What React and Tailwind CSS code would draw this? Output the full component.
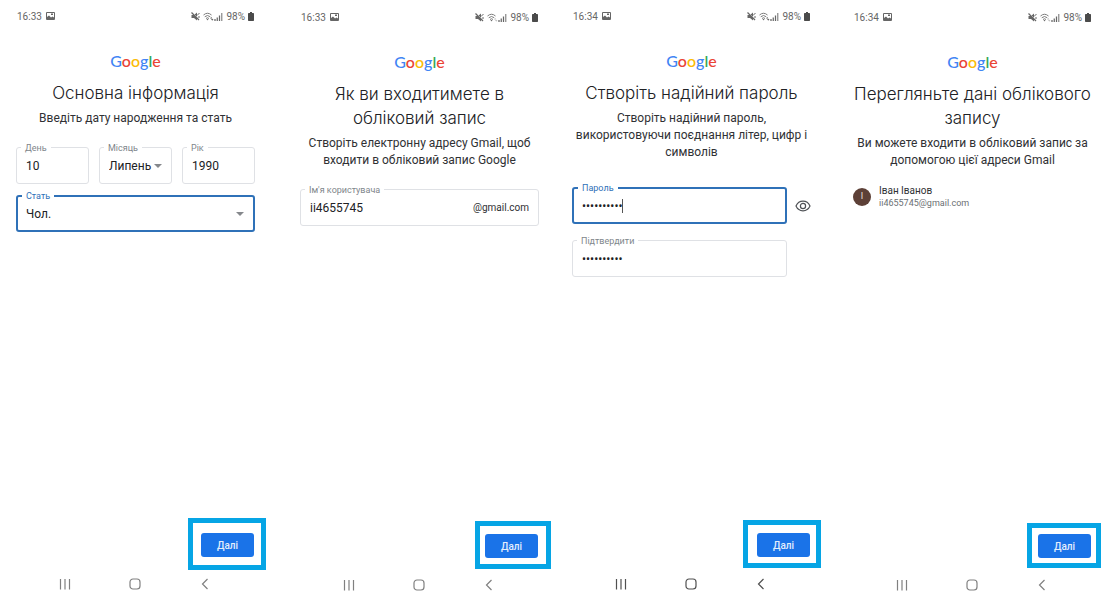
import { useId } from "react";

function PhotoIcon() {
  return (
    <svg viewBox="0 0 18 16" className="h-2 w-[9px]" aria-hidden="true">
      <path
        fillRule="evenodd"
        fill="currentColor"
        d="M2 0h14a2 2 0 0 1 2 2v12a2 2 0 0 1-2 2H2a2 2 0 0 1-2-2V2a2 2 0 0 1 2-2zm0 2v8l4-3 4 4 3-2 3 2V2zm8 1h4v3h-4z"
      />
    </svg>
  );
}

function MuteIcon() {
  return (
    <svg viewBox="0 0 18 18" className="h-[9px] w-[9px]" aria-hidden="true">
      <path fill="currentColor" d="M1 6h5l6-5v16l-6-5H1z" />
      <path d="M3 1l14 14" stroke="#fff" strokeWidth="1.5" />
      <path d="M1 1l15 15" stroke="currentColor" strokeWidth="2.5" />
      <path d="M12 7l5-5M14 10h4" stroke="currentColor" strokeWidth="2" fill="none" />
    </svg>
  );
}

function WifiIcon({ active }) {
  return (
    <svg viewBox="0 0 22 18" className="h-[9px] w-[11px]" aria-hidden="true" fill="none">
      <g stroke="currentColor" strokeWidth="2" opacity="0.85">
        <path d="M1 6q8-7 16 0" />
        <path d="M3.5 9.500q5.500-5 11 0" />
        <path d="M6 13q3-3 6 0" />
      </g>
      <path d="M7 14h4l-2 3z" fill="currentColor" />
      <path d="M14 13l2.500-3 2.500 3zM16 14h5l-2.500 3.500z" fill="currentColor" opacity={active ? 1 : 0.4} />
    </svg>
  );
}

function SignalIcon() {
  return (
    <svg viewBox="0 0 18 18" className="h-[9px] w-[9px]" aria-hidden="true" stroke="currentColor" strokeWidth="2.5">
      <path d="M2 18v-4M6.500 18v-7M11 18V7" />
      <path d="M15.500 18V2" opacity="0.75" />
    </svg>
  );
}

function BatteryIcon() {
  return (
    <svg viewBox="0 0 12 18" className="h-[9px] w-1.5" aria-hidden="true">
      <path
        fill="#4b4b4b"
        d="M4 0h4v2h2.500a1.500 1.500 0 0 1 1.500 1.500v13a1.500 1.500 0 0 1-1.500 1.500h-9A1.500 1.500 0 0 1 0 16.500v-13A1.500 1.500 0 0 1 1.500 2H4z"
      />
    </svg>
  );
}

function StatusBar({ time, active }) {
  return (
    <div className="flex h-4 items-center justify-between px-px text-[10px] text-[#666]">
      <div className="flex items-center gap-1">
        <span>{time}</span>
        <PhotoIcon />
      </div>
      <div className="flex items-center gap-[3px]">
        <MuteIcon />
        <div className="flex items-center">
          <WifiIcon active={active} />
          <SignalIcon />
        </div>
        <span>98%</span>
        <BatteryIcon />
      </div>
    </div>
  );
}

function Logo() {
  return (
    <div
      className="mt-[25px] text-center font-['Lato',sans-serif] text-[16px] leading-6 font-medium"
      aria-label="Google"
    >
      <span className="text-[#4285f4]">G</span>
      <span className="text-[#ea4335]">o</span>
      <span className="text-[#fbbc05]">o</span>
      <span className="text-[#4285f4]">g</span>
      <span className="text-[#34a853]">l</span>
      <span className="text-[#ea4335]">e</span>
    </div>
  );
}

function Heading({ title, text }) {
  return (
    <header className="mt-2 text-center">
      <h1 className="font-['Inter',sans-serif] text-[17px] leading-6 font-light whitespace-pre text-[#202124]">
        {title}
      </h1>
      <p className="mt-[5px] text-[12px] leading-[17px] whitespace-pre text-[#303134]">{text}</p>
    </header>
  );
}

function Outline({ id, label, focused, children }) {
  return (
    <div
      className={
        "relative flex h-[37px] items-center rounded-[3px] bg-white " +
        (focused ? "border-2 border-[#2f71b8] px-2" : "border border-[#dfe1e5] px-[9px]")
      }
    >
      <label
        htmlFor={id}
        className={
          "absolute left-1 bg-white px-1 text-[9px] leading-[10px] whitespace-nowrap " +
          (focused ? "-top-1.5 text-[#2f71b8]" : "-top-[5px] text-[#80868b]")
        }
      >
        {label}
      </label>
      {children}
    </div>
  );
}

function TextField({ label, value, type = "text", focused, suffix }) {
  const id = useId();
  return (
    <Outline id={id} label={label} focused={focused}>
      <input
        id={id}
        type={type}
        defaultValue={value}
        className="w-full min-w-0 bg-transparent text-[12px] text-[#202124] outline-none"
      />
      {suffix && <span className="text-[10px] text-[#303134]">{suffix}</span>}
      {type === "password" && focused && <span className="absolute left-12 h-3.5 w-px bg-[#555]" />}
    </Outline>
  );
}

function SelectField({ label, value, focused }) {
  const id = useId();
  return (
    <Outline id={id} label={label} focused={focused}>
      <select
        id={id}
        defaultValue={value}
        className="w-full min-w-0 appearance-none bg-transparent text-[12px] text-[#202124] outline-none"
      >
        <option>{value}</option>
      </select>
      <svg viewBox="0 0 8 4" className="pointer-events-none absolute right-[9px] h-1 w-2" aria-hidden="true">
        <path d="M0 0h8L4 4z" fill="#85888c" />
      </svg>
    </Outline>
  );
}

function NavBar({ tone }) {
  return (
    <nav className={"flex h-4 items-center justify-center gap-[58px] pr-0.5 " + tone}>
      <button type="button" aria-label="Останні" className="w-3">
        <svg viewBox="0 0 12 12" className="h-3 w-3" stroke="currentColor" strokeWidth="1.2">
          <path d="M1.500 1v10.500M6 1v10.500M10.500 1v10.500" />
        </svg>
      </button>
      <button type="button" aria-label="Головна" className="w-3">
        <svg viewBox="0 0 12 12" className="h-3 w-3" fill="none" stroke="currentColor" strokeWidth="1.2">
          <rect x="1" y="1" width="10" height="10" rx="3" />
        </svg>
      </button>
      <button type="button" aria-label="Назад" className="w-3">
        <svg viewBox="0 0 12 12" className="h-3 w-3" fill="none" stroke="currentColor" strokeWidth="1.2">
          <path d="M8.500 1L3.500 6l5 5" />
        </svg>
      </button>
    </nav>
  );
}

function Screen({ time, active, title, text, className, frame, tone = "text-[#808080]", children }) {
  return (
    <section className={"flex min-w-0 flex-1 flex-col " + className}>
      <StatusBar time={time} active={active} />
      <Logo />
      <Heading title={title} text={text} />
      {children}
      <div className="mt-auto flex justify-end pr-px">
        <div className="relative">
          <button
            type="button"
            className="block h-6 w-[53px] rounded-[3px] bg-[#1a73e8] text-[10px] font-medium text-[#e3eefc]"
          >
            Далі
          </button>
          <div className={"pointer-events-none absolute border-[5px] border-[#06a5e5] " + frame} />
        </div>
      </div>
      <div className="mt-[19px]">
        <NavBar tone={tone} />
      </div>
    </section>
  );
}

export default function App() {
  return (
    <main className="flex min-h-screen overflow-hidden bg-white pr-3 pl-4 font-['Roboto',sans-serif]">
      <Screen
        time="16:33"
        active
        title="Основна інформація"
        text="Введіть дату народження та стать"
        className="pt-2 pb-2"
        frame="-top-[15px] -right-3 -bottom-[13px] -left-[13px]"
      >
        <div className="mt-5 grid grid-cols-3 gap-x-2.5 gap-y-[11px]">
          <TextField label="День" value="10" />
          <SelectField label="Місяць" value="Липень" />
          <TextField label="Рік" value="1990" />
          <div className="col-span-3">
            <SelectField label="Стать" value="Чол." focused />
          </div>
        </div>
      </Screen>

      <Screen
        time="16:33"
        title={"Як ви входитимете в\nобліковий запис"}
        text={"Створіть електронну адресу Gmail, щоб\nвходити в обліковий запис Google"}
        className="ml-[45px] pt-[9px] pb-[7px]"
        frame="-top-[13px] -right-[13px] -bottom-[11px] -left-2.5"
      >
        <div className="mt-5">
          <TextField label="Ім'я користувача" value="ii4655745" suffix="@gmail.com" />
        </div>
      </Screen>

      <Screen
        time="16:34"
        active
        title="Створіть надійний пароль"
        text={"Створіть надійний пароль,\nвикористовуючи поєднання літер, цифр і\nсимволів"}
        className="ml-[33px] pt-2 pb-2"
        frame="-top-[13px] -right-[11px] -bottom-[11px] -left-3.5"
        tone="text-[#505050]"
      >
        <div className="mt-[26px] flex items-start gap-2">
          <div className="flex flex-1 flex-col gap-4">
            <TextField label="Пароль" value="password10" type="password" focused />
            <TextField label="Підтвердити" value="password10" type="password" />
          </div>
          <button type="button" aria-label="Показати пароль" className="flex h-[37px] w-4 items-center">
            <svg viewBox="0 0 16 12" className="h-3 w-4" fill="none" stroke="#4d5054" strokeWidth="1.2">
              <path d="M1 6C2.500 2.700 5 1.200 8 1.200S13.500 2.700 15 6c-1.500 3.300-4 4.800-7 4.800S2.500 9.300 1 6z" />
              <circle cx="8" cy="6" r="2.600" />
            </svg>
          </button>
        </div>
      </Screen>

      <Screen
        time="16:34"
        title={"Перегляньте дані облікового\nзапису"}
        text={"Ви можете входити в обліковий запис за\nдопомогою цієї адреси Gmail"}
        className="ml-[42px] pt-[9px] pb-[7px]"
        frame="-top-[11px] -right-2.5 -bottom-2.5 -left-[11px]"
      >
        <div className="mt-[15px] flex items-center gap-2">
          <div className="flex size-[18px] items-center justify-center rounded-full bg-[#5d4037] text-[9px] text-[#e8dcd8]">
            І
          </div>
          <div>
            <div className="text-[10px] leading-[13px] text-[#303134]">Іван Іванов</div>
            <div className="text-[9px] leading-3 text-[#6b6f73]">ii4655745@gmail.com</div>
          </div>
        </div>
      </Screen>
    </main>
  );
}
